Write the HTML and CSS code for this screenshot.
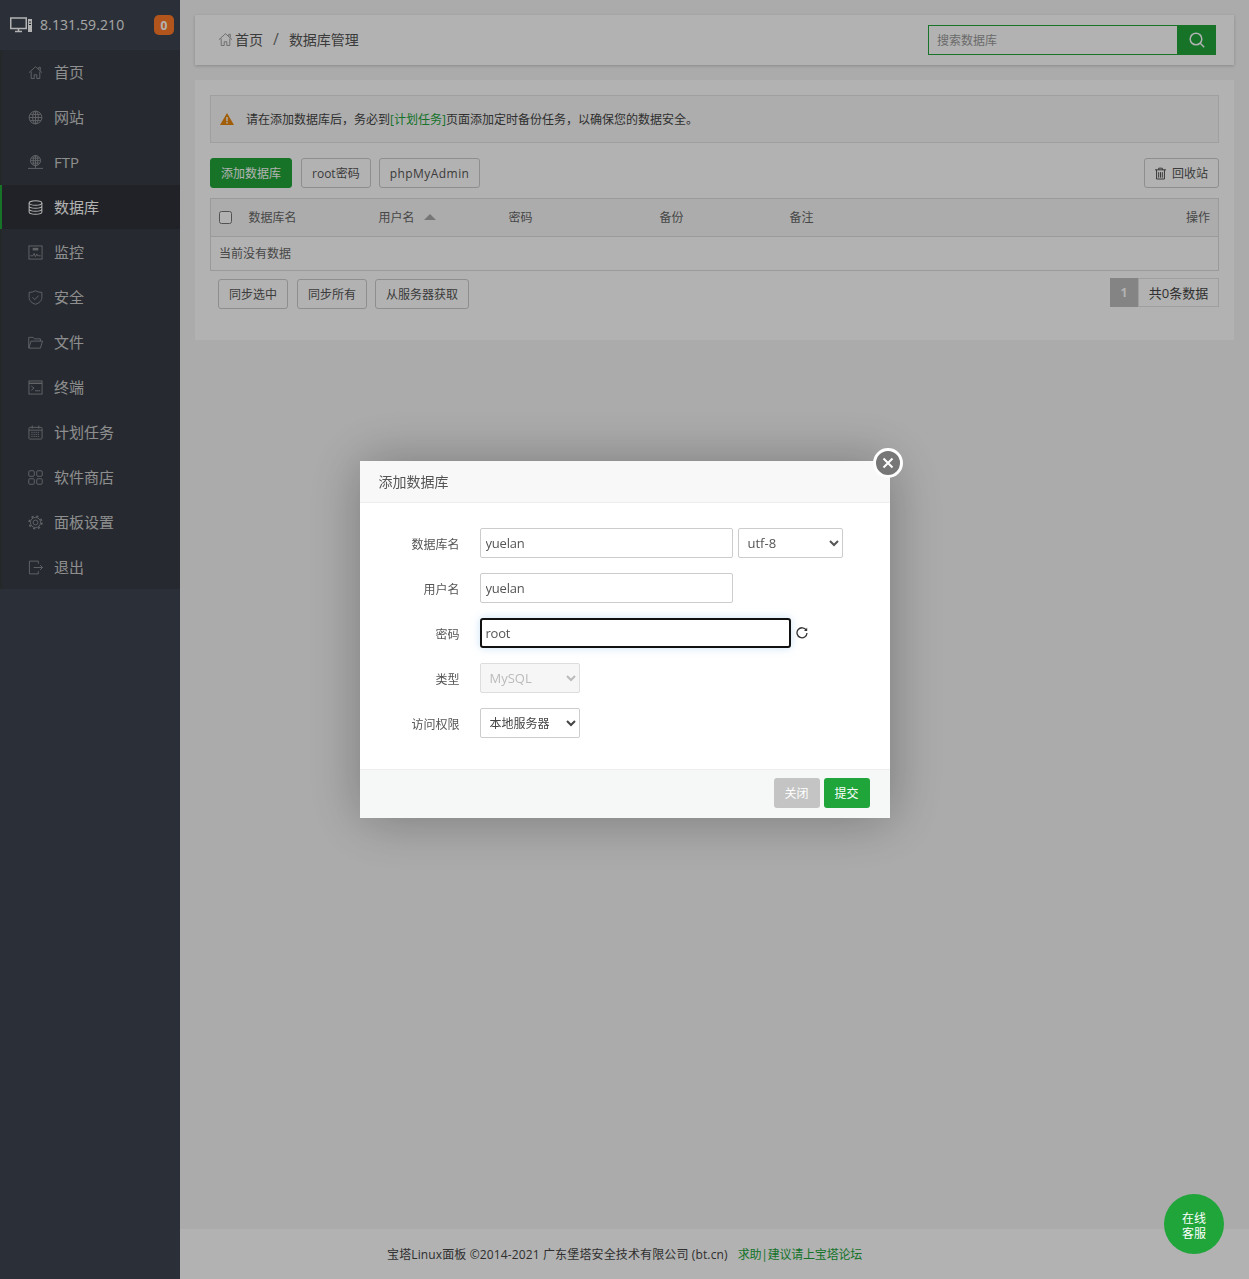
FILE: index.html
```html
<!DOCTYPE html>
<html lang="zh-CN">
<head>
<meta charset="utf-8">
<title>数据库管理</title>
<link rel="stylesheet" href="styles.css">
</head>
<body>
<div class="app">
  <aside class="sidebar">
    <div class="host">
      <svg class="host-icon" viewBox="0 0 23 16" fill="none" stroke="currentColor"><rect x="0.75" y="1" width="15.5" height="10.5" stroke-width="1.5"/><path d="M5 14.5h7M8.5 12v2" stroke-width="1.5"/><rect x="18" y="2" width="4" height="13" fill="currentColor" stroke="none"/><path d="M19 5h2M19 7.5h2" stroke="#2b3038"/></svg>
      <span class="host-ip">8.131.59.210</span>
      <span class="badge">0</span>
    </div>
    <nav class="nav">
      <a class="nav-item"><svg class="nav-icon" viewBox="0 0 16 16" fill="none" stroke="currentColor"><path d="M1 8.2 8 1.800l7 6.400M3.400 7v7.400h3.200v-4h2.800v4h3.200V7M11.500 4.600V2.400h1.600V6"/></svg><span>首页</span></a>
      <a class="nav-item"><svg class="nav-icon" viewBox="0 0 16 16" fill="none" stroke="currentColor"><circle cx="8" cy="8" r="6.800"/><ellipse cx="8" cy="8" rx="3" ry="6.800"/><path d="M8 1.200v13.600M1.200 8h13.600M2.400 4.700h11.200M2.400 11.300h11.200"/></svg><span>网站</span></a>
      <a class="nav-item"><svg class="nav-icon" viewBox="0 0 16 16" fill="none" stroke="currentColor"><circle cx="8" cy="6" r="5.400"/><ellipse cx="8" cy="6" rx="2.400" ry="5.400"/><path d="M8 .6v10.800M2.600 6h10.800M3.600 3.400h8.800M3.600 8.600h8.800M8 11.400v2.400M0 14.300h16"/></svg><span>FTP</span></a>
      <a class="nav-item active"><svg class="nav-icon" viewBox="0 0 16 16" fill="none" stroke="currentColor" stroke-width="1.100"><ellipse cx="8" cy="3.200" rx="6.800" ry="2.400"/><path d="M1.200 3.200v9.600c0 1.300 3 2.400 6.800 2.400s6.800-1.100 6.800-2.400V3.200M1.200 6.400c0 1.300 3 2.400 6.800 2.400s6.800-1.100 6.800-2.400M1.200 9.600c0 1.300 3 2.400 6.800 2.400s6.800-1.100 6.800-2.400"/></svg><span>数据库</span></a>
      <a class="nav-item"><svg class="nav-icon" viewBox="0 0 16 16" fill="none" stroke="currentColor"><rect x="1" y="1" width="14" height="14"/><path d="M2.500 11.500h2.700l1.300-2.500 1.400 3.500 1.500-3 1 2h3.100"/><rect x="5" y="3" width="6" height="2.800" fill="currentColor" stroke="none"/></svg><span>监控</span></a>
      <a class="nav-item"><svg class="nav-icon" viewBox="0 0 16 16" fill="none" stroke="currentColor"><path d="M8 .8c2 1.200 4.200 1.700 6.800 1.700v5.500c0 3.500-2.900 6-6.800 7.200-3.900-1.200-6.800-3.700-6.800-7.200V2.500C3.800 2.500 6 2 8 .8Z"/><path d="m4.800 7.800 2.400 2.500 4-4.300"/></svg><span>安全</span></a>
      <a class="nav-item"><svg class="nav-icon" viewBox="0 0 16 16" fill="none" stroke="currentColor"><path d="M.8 14V2.500h4.700l1.300 1.600h6.400v2.400M.8 14h12.400l2.300-7.500H3.300L.8 14Z"/></svg><span>文件</span></a>
      <a class="nav-item"><svg class="nav-icon" viewBox="0 0 16 16" fill="none" stroke="currentColor"><rect x="1" y="1" width="14" height="14"/><path d="M1 3.500h14" stroke-width="1.500"/><path d="m3.500 6.500 3 2.200-3 2.200M7.500 11.500h5.500"/></svg><span>终端</span></a>
      <a class="nav-item"><svg class="nav-icon" viewBox="0 0 16 16" fill="none" stroke="currentColor"><rect x="1" y="2.500" width="14" height="12.500" rx="1"/><path d="M4.500.6v3.200M11.500.6v3.200M1 5.500h14"/><path d="M3.500 7.800h9M3.500 10h9M3.500 12.200h9" stroke-dasharray="1.400 .9"/></svg><span>计划任务</span></a>
      <a class="nav-item"><svg class="nav-icon" viewBox="0 0 16 16" fill="none" stroke="currentColor"><rect x=".8" y=".8" width="5.900" height="5.900" rx="1.200"/><rect x="9.300" y=".8" width="5.900" height="5.900" rx="1.200"/><rect x=".8" y="9.300" width="5.900" height="5.900" rx="1.200"/><rect x="9.300" y="9.300" width="5.900" height="5.900" rx="1.200"/></svg><span>软件商店</span></a>
      <a class="nav-item"><svg class="nav-icon" viewBox="0 0 16 16" fill="none" stroke="currentColor"><circle cx="8" cy="8" r="2.600"/><circle cx="8" cy="8" r="5.400"/><circle cx="8" cy="8" r="6.800" stroke-width="1.600" stroke-dasharray="2.400 2.940"/></svg><span>面板设置</span></a>
      <a class="nav-item"><svg class="nav-icon" viewBox="0 0 16 16" fill="none" stroke="currentColor"><path d="M11 4V1.200H1.500v13.600H11V12M6 8h9.500M13 5.500 15.500 8 13 10.500"/></svg><span>退出</span></a>
    </nav>
  </aside>

  <div class="main">
    <div class="content">
      <header class="crumbs card">
        <div class="crumb-path">
          <svg class="crumb-home" viewBox="0 0 16 16" fill="none" stroke="currentColor"><path d="M1 8.200 8 1.800l7 6.400M3.400 7v7.400h3.200v-4h2.800v4h3.200V7M11.500 4.600V2.400h1.600V6"/></svg>
          <span>首页</span><span class="crumb-sep">/</span><span>数据库管理</span>
        </div>
        <div class="search">
          <input class="search-input" type="text" placeholder="搜索数据库">
          <button class="search-btn" type="button"><svg viewBox="0 0 16 16" fill="none" stroke="currentColor" stroke-width="1.500"><circle cx="7" cy="7" r="5.800"/><path d="m11.200 11.200 4 4"/></svg></button>
        </div>
      </header>

      <section class="panel card">
        <div class="alert">
          <svg class="alert-icon" viewBox="0 0 14 12"><path d="M7 0 14 12H0Z" fill="#e8860c"/><path d="M6.300 4h1.400v4.200H6.300ZM6.300 9h1.400v1.400H6.300Z" fill="#fff"/></svg>
          <span>请在添加数据库后，务必到<a class="link">[计划任务]</a>页面添加定时备份任务，以确保您的数据安全。</span>
        </div>

        <div class="toolbar">
          <button class="btn btn-green" type="button">添加数据库</button>
          <button class="btn" type="button">root密码</button>
          <button class="btn btn-php" type="button">phpMyAdmin</button>
          <button class="btn btn-recycle" type="button"><svg viewBox="0 0 12 13" fill="none" stroke="currentColor"><path d="M0 2.500h12M4 2.500V.7h4v1.800M1.700 2.500v10h8.600v-10M4 5v6M6 5v6M8 5v6"/></svg>回收站</button>
        </div>

        <table class="table">
          <colgroup><col class="col-check"><col class="col-name"><col class="col-user"><col class="col-pass"><col class="col-back"><col><col class="col-op"></colgroup>
          <thead>
            <tr>
              <th><input class="check" type="checkbox"></th>
              <th>数据库名</th>
              <th>用户名<i class="sort"></i></th>
              <th>密码</th>
              <th>备份</th>
              <th>备注</th>
              <th class="right">操作</th>
            </tr>
          </thead>
          <tbody>
            <tr><td colspan="7">当前没有数据</td></tr>
          </tbody>
        </table>

        <div class="table-foot">
          <div class="sync">
            <button class="btn" type="button">同步选中</button>
            <button class="btn" type="button">同步所有</button>
            <button class="btn" type="button">从服务器获取</button>
          </div>
          <div class="pager"><span class="page-cur">1</span><span class="page-total">共0条数据</span></div>
        </div>
      </section>
    </div>

    <footer class="footer card"><span class="foot-text">宝塔Linux面板 ©2014-2021 广东堡塔安全技术有限公司 (bt.cn)</span><a class="foot-link">求助|建议请上宝塔论坛</a></footer>
  </div>
</div>

<div class="shade">
  <div class="modal">
    <button class="modal-close" type="button"><svg viewBox="0 0 12 12" fill="none" stroke="#fff" stroke-width="2"><path d="m1.500 1.500 9 9M10.500 1.500l-9 9"/></svg></button>
    <div class="modal-title">添加数据库</div>
    <form class="modal-body">
      <div class="row">
        <label class="row-label">数据库名</label>
        <input class="field field-wide" type="text" value="yuelan">
        <select class="field select-charset"><option>utf-8</option></select>
      </div>
      <div class="row">
        <label class="row-label">用户名</label>
        <input class="field field-wide" type="text" value="yuelan">
      </div>
      <div class="row">
        <label class="row-label">密码</label>
        <input class="field field-pass" type="text" value="root">
        <svg class="refresh" viewBox="0 0 12 12" fill="none" stroke="#333" stroke-width="1.300"><path d="M10.300 3.200A5 5 0 1 0 11 6"/><path d="M11.200.8v3.300H8" fill="#333" stroke="none"/></svg>
      </div>
      <div class="row">
        <label class="row-label">类型</label>
        <select class="field select-short" disabled><option>MySQL</option></select>
      </div>
      <div class="row">
        <label class="row-label">访问权限</label>
        <select class="field select-short select-cjk"><option>本地服务器</option></select>
      </div>
    </form>
    <div class="modal-foot">
      <button class="mbtn mbtn-grey" type="button">关闭</button>
      <button class="mbtn mbtn-green" type="button">提交</button>
    </div>
  </div>
</div>

<a class="service">在线<br>客服</a>
</body>
</html>
```

FILE: styles.css
```css
* { box-sizing: border-box; }
html, body { margin: 0; height: 100%; }
body {
  font-family: "Open Sans", "Noto Sans CJK SC", sans-serif;
  font-size: 12px;
  color: #555;
  background: #f5f5f5;
}
a { text-decoration: none; }
button, input, select { font-family: inherit; }

.app { display: flex; height: 1279px; }

/* sidebar */
.sidebar { width: 180px; flex: none; background: #3e444f; }
.host { height: 50px; display: flex; align-items: center; padding: 0 6px 0 10px; color: #eee; }
.host-icon { width: 23px; height: 16px; flex: none; margin-right: 7px; color: #fff; }
.host-ip { font-size: 14px; flex: 1; letter-spacing: .1px; padding-bottom: 2px; }
.badge { width: 20px; height: 20px; border-radius: 5px; background: #ff7a2a; color: #fff; font-size: 12px; font-weight: 700; display: flex; align-items: center; justify-content: center; }
.nav { background: #373c46; }
.nav-item { height: 45px; display: flex; align-items: center; padding-left: 26px; font-size: 15px; color: #ccc; border-left: 2px solid #363a3a; }
.nav-item:last-child { height: 44px; }
.nav-item span { padding-bottom: 2px; }
.nav-icon { width: 15px; height: 15px; flex: none; margin-right: 11px; color: #8c8f94; }
.nav-item.active { background: #2f3238; color: #fff; border-left-color: #20a53a; height: 44px; margin-bottom: 1px; }
.nav-item.active .nav-icon { color: #fff; }

/* main */
.main { flex: 1; min-width: 0; display: flex; flex-direction: column; }
.content { flex: 1; padding: 15px 15px 0; display: flex; flex-direction: column; gap: 15px; }
.card { background: #fff; }

.crumbs { height: 50px; display: flex; align-items: center; justify-content: space-between; padding: 0 18px 0 23px; box-shadow: 0 1px 3px rgba(0,0,0,.2); }
.crumb-path { display: flex; align-items: center; font-size: 14px; color: #555; padding-bottom: 2px; }
.crumb-home { width: 15px; height: 15px; margin-right: 2px; color: #999; }
.crumb-sep { margin: 0 10px; color: #777; font-size: 16px; line-height: 20px; }
.search { display: flex; height: 30px; }
.search-input { width: 249px; height: 30px; border: 1px solid #20a53a; border-right: 0; background: #fff; padding: 0 8px; font-size: 12px; outline: 0; }
.search-input::placeholder { color: #999; }
.search-btn { width: 39px; height: 30px; border: 0; padding: 0; background: #20a53a; color: #fff; display: flex; align-items: center; justify-content: center; }
.search-btn svg { width: 16px; height: 16px; }

.panel { height: 260px; padding: 15px; }
.alert { height: 48px; display: flex; align-items: center; border: 1px solid #e4e4e4; background: #f8f8f8; padding-left: 9px; color: #444; font-size: 12px; }
.alert-icon { width: 14px; height: 12px; margin-right: 12px; }
.link { color: #20a53a; }

.toolbar { display: flex; gap: 9px; margin-top: 15px; }
.btn { height: 30px; padding: 0 10px; border: 1px solid #ccc; border-radius: 3px; background: #fff; color: #555; font-size: 12px; white-space: nowrap; }
.btn-php { letter-spacing: .45px; margin-left: -1px; }
.btn-green { background: #20a53a; border-color: #20a53a; color: #fff; }
.btn-recycle { margin-left: auto; display: flex; align-items: center; gap: 6px; }
.btn-recycle svg { width: 11px; height: 13px; color: #444; }

.table { width: 100%; margin-top: 10px; border-collapse: collapse; table-layout: fixed; border: 1px solid #ddd; font-size: 12px; }
.col-check { width: 30px; }
.col-name, .col-user, .col-back { width: 130px; }
.col-pass { width: 151px; }
.col-op { width: 100px; }
.table th { height: 38px; padding: 0 8px 2px; background: #f6f6f6; border-bottom: 1px solid #ddd; text-align: left; font-weight: 400; color: #666; }
.table th.right { text-align: right; }
.table td { height: 34px; padding: 0 8px 2px; color: #666; }
.check { width: 13px; height: 13px; margin: 2px 0 0; display: block; }
.sort { display: inline-block; margin-left: 9px; border: 6px solid transparent; border-top: 0; border-bottom: 6px solid #aaa; vertical-align: 2px; }

.table-foot { display: flex; justify-content: space-between; align-items: flex-start; margin-top: 7px; }
.sync { display: flex; gap: 8px; padding: 1px 0 0 8px; }
.sync .btn:first-child { margin-right: 1px; }
.pager { display: flex; height: 29px; }
.page-cur { width: 28px; background: #bdbdbd; color: #fff; font-weight: 700; display: flex; align-items: center; justify-content: center; }
.page-total { width: 81px; border: 1px solid #e4e4e4; color: #444; font-size: 13px; display: flex; align-items: center; justify-content: center; }

.footer { height: 50px; display: flex; align-items: center; padding-left: 207px; color: #444; font-size: 12px; }
.foot-text { letter-spacing: .13px; }
.foot-link { margin-left: 10px; color: #20a53a; letter-spacing: -.2px; }

/* layer */
.shade { position: fixed; inset: 0; background: rgba(0,0,0,.3); display: flex; align-items: center; justify-content: center; }
.modal { position: relative; width: 530px; height: 357px; background: #fff; box-shadow: 1px 1px 50px rgba(0,0,0,.3); display: flex; flex-direction: column; }
.modal-close { position: absolute; left: 513px; top: -13px; width: 30px; height: 30px; padding: 0; border: 3px solid #fff; border-radius: 50%; background: #777; display: flex; align-items: center; justify-content: center; }
.modal-close svg { width: 12px; height: 12px; }
.modal-title { height: 42px; padding: 0 19px; line-height: 41px; background: #f8f8f8; border-bottom: 1px solid #eee; font-size: 14px; color: #555; }
.modal-body { flex: 1; padding-top: 25px; display: flex; flex-direction: column; gap: 15px; }
.row { height: 30px; display: flex; align-items: center; }
.row-label { width: 100px; margin-right: 20px; text-align: right; color: #555; font-size: 12px; padding-top: 2px; }
.field { height: 30px; border: 1px solid #ccc; border-radius: 2px; background: #fff; color: #555; font-size: 13px; padding: 0 5px; outline: 0; }
.field-wide { width: 253px; letter-spacing: -.2px; }
.select-charset { width: 105px; margin-left: 5px; padding-left: 5px; }
.field-pass { width: 311px; border: 2px solid #111; border-radius: 3px; padding: 0 4px; letter-spacing: -.2px; box-shadow: 0 0 8px rgba(102,175,233,.35); }
.refresh { width: 12px; height: 12px; margin-left: 5px; }
.select-short { width: 100px; padding: 0 5px; }
.select-short:disabled { background: #f6f6f6; color: #bbb; border-color: #ddd; opacity: 1; }
.select-cjk { font-size: 12px; color: #444; }
.modal-foot { height: 49px; display: flex; justify-content: flex-end; gap: 4px; padding: 8px 20px 0 0; background: #f6f8f8; border-top: 1px solid #eee; }
.mbtn { width: 46px; height: 30px; border: 0; border-radius: 3px; color: #fff; font-size: 12px; padding: 0; }
.mbtn-grey { background: #c4c4c4; }
.mbtn-green { background: #20a53a; }

.service { position: fixed; right: 25px; bottom: 25px; width: 60px; height: 60px; padding-top: 4px; border-radius: 50%; background: #20a53a; color: #fff; font-size: 12px; line-height: 15px; display: flex; align-items: center; justify-content: center; text-align: center; }
```
